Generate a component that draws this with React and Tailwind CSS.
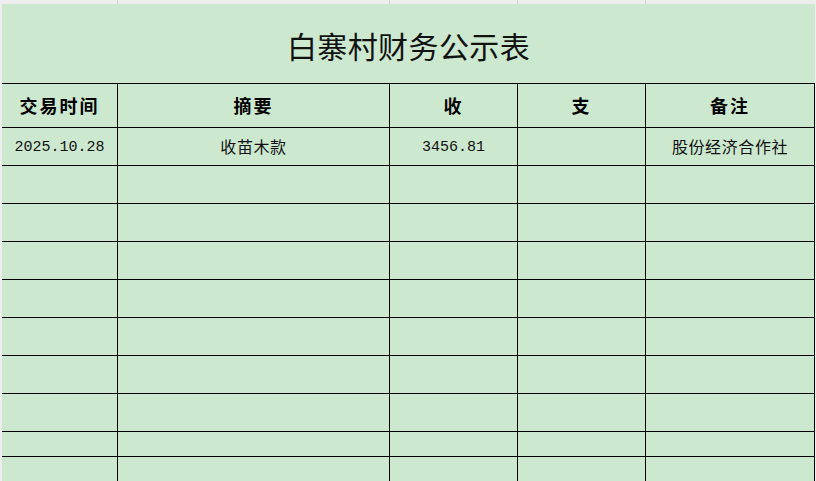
import React from 'react'

const cols = ['w-[116px]', 'w-[272px]', 'w-[128px]', 'w-[128px]', 'w-[169px]']
const headers = ['交易时间', '摘要', '收', '支', '备注']
const rows = [
  { h: 'h-[38px]', cells: ['2025.10.28', '收苗木款', '3456.81', '', '股份经济合作社'] },
  { h: 'h-[38px]', cells: [] },
  { h: 'h-[38px]', cells: [] },
  { h: 'h-[38px]', cells: [] },
  { h: 'h-[38px]', cells: [] },
  { h: 'h-[38px]', cells: [] },
  { h: 'h-[38px]', cells: [] },
  { h: 'h-[38px]', cells: [] },
  { h: 'h-[25px]', cells: [] },
  { h: 'h-[30px]', cells: [] },
]

const cjk = { fontFamily: '"Noto Sans CJK SC", "Noto Sans", sans-serif' }

function Cell({ width, height, children, mono }) {
  return (
    <div
      className={`${width} ${height} shrink-0 border-r border-b border-black flex items-center justify-center text-[#111]`}
    >
      {mono ? (
        <span className="text-[15px] pt-[3px]" style={{ fontFamily: '"Liberation Mono", monospace' }}>
          {children}
        </span>
      ) : (
        <span className="text-[16px] tracking-[0.6px] pb-[1px]" style={cjk}>
          {children}
        </span>
      )}
    </div>
  )
}

export default function App() {
  return (
    <div className="w-[816px] h-[481px] bg-[#eeeeee] overflow-hidden">
      <div className="h-[4px] flex pl-[2px]">
        <div className="w-[116px] border-r border-[#cfcfcf]" />
        <div className="w-[272px] border-r border-[#cfcfcf]" />
        <div className="w-[128px] border-r border-[#cfcfcf]" />
        <div className="w-[128px] border-r border-[#cfcfcf]" />
      </div>
      <div className="ml-[2px] w-[813px] bg-[#cce8cf]">
        <div className="h-[80px] w-[813px] border-b border-black flex items-center justify-center pt-[4px]">
          <h1 className="text-[30px] font-normal tracking-[0.4px] text-[#111]" style={cjk}>
            白寨村财务公示表
          </h1>
        </div>
        <div className="flex">
          {headers.map((t, i) => (
            <div
              key={t}
              className={`${cols[i]} h-[44px] shrink-0 border-r border-b border-black flex items-center justify-center`}
            >
              <span className="text-[18px] font-bold tracking-[2px] text-black" style={cjk}>
                {t}
              </span>
            </div>
          ))}
        </div>
        {rows.map((r, ri) => (
          <div key={ri} className="flex">
            {cols.map((w, ci) => (
              <Cell key={ci} width={w} height={r.h} mono={ci === 0 || ci === 2}>
                {r.cells[ci] || ''}
              </Cell>
            ))}
          </div>
        ))}
      </div>
    </div>
  )
}
